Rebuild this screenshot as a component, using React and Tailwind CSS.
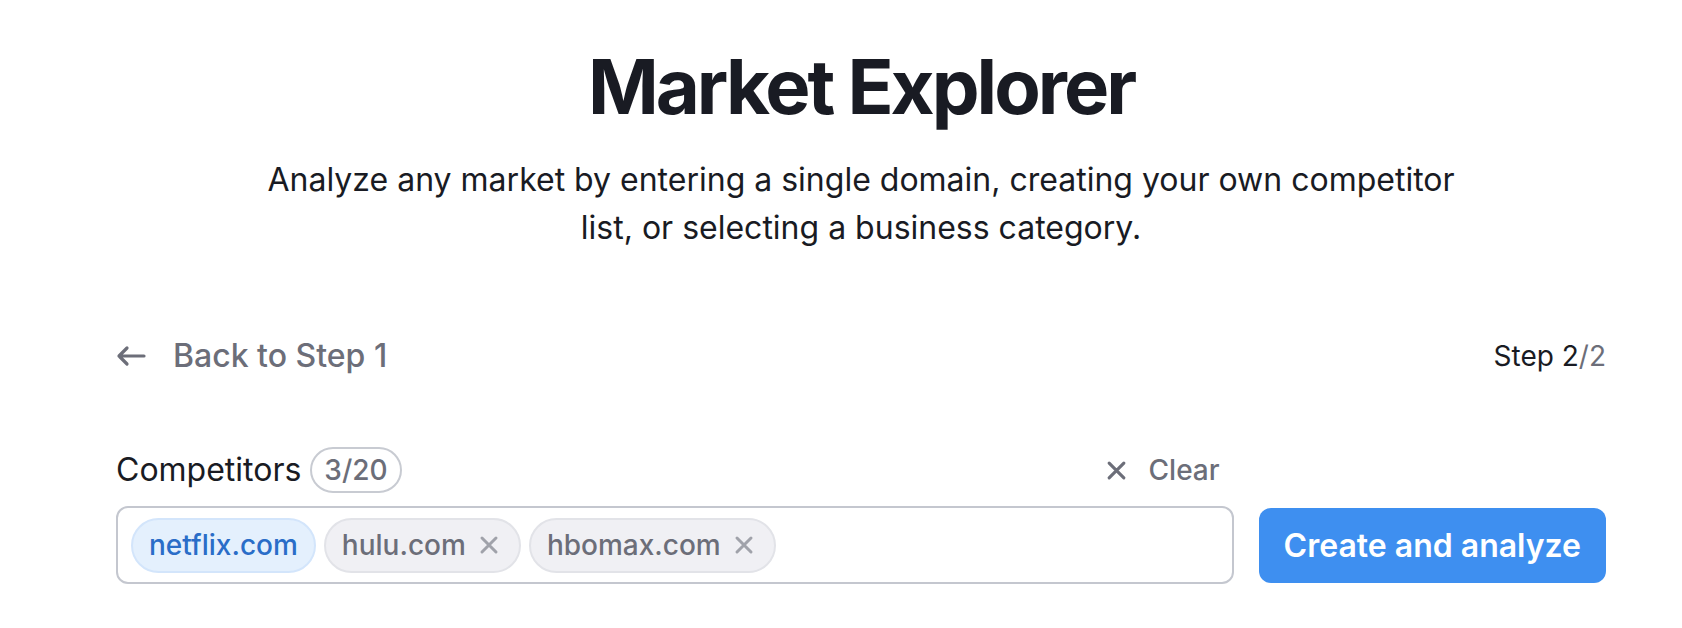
import React from 'react';

const font = { fontFamily: 'Inter, "Noto Sans", sans-serif' };

// bold X glyph used on chips and the Clear link
const Cross = ({ className, size = 20 }) => (
  <svg viewBox="0 0 20 20" width={size} height={size} className={className} fill="none" stroke="currentColor" strokeWidth="3" strokeLinecap="round">
    <path d="M3 3l14 14M17 3L3 17" />
  </svg>
);

const Chip = ({ label, active }) =>
  active ? (
    <div className="h-[55px] flex items-center px-[16px] rounded-full border-2 border-[#d3e5fb] bg-[#e4f0fd] text-[28px] font-medium text-[#2a6dc8]">
      {label}
    </div>
  ) : (
    <div className="h-[55px] flex items-center pl-[16px] pr-[20px] gap-[13px] rounded-full border-2 border-[#e2e3e8] bg-[#f0f0f4] text-[28px] font-medium text-[#6c6e79]">
      {label}
      <Cross className="text-[#a0a2aa]" size={20} />
    </div>
  );

export default function App() {
  return (
    <div className="w-[1682px] h-[628px] bg-white text-[#191b23] pl-[116px] pr-[76px] pt-[38px]" style={font}>
      {/* Heading */}
      <h1 className="text-center text-[76px] leading-[96px] font-bold tracking-[-3px]">Market Explorer</h1>
      <p className="mt-[22px] text-center text-[32px] leading-[48px]">
        Analyze any market by entering a single domain, creating your own competitor
        <br />
        list, or selecting a business category.
      </p>

      {/* Step row */}
      <div className="mt-[84px] flex items-center justify-between h-[40px]">
        <div className="flex items-center gap-[27px] text-[32px] text-[#6c6e79] font-medium">
          <svg viewBox="0 0 30 24" className="w-[30px] h-[24px]" fill="none" stroke="currentColor" strokeWidth="3.2" strokeLinecap="round" strokeLinejoin="round">
            <path d="M28 12H3M11 4l-8 8 8 8" />
          </svg>
          Back to Step 1
        </div>
        <div className="text-[28px]">
          Step 2<span className="text-[#6c6e79]">/2</span>
        </div>
      </div>

      {/* Competitors form */}
      <div className="mt-[70px] flex items-end gap-[25px]">
        <div className="flex-1">
          <div className="flex items-center justify-between h-[48px]">
            <div className="flex items-center gap-[9px]">
              <span className="text-[32px]">Competitors</span>
              <span className="h-[46px] px-[12px] flex items-center rounded-full border-2 border-[#c8cbd2] text-[28px] font-medium text-[#6c6e79]">3/20</span>
            </div>
            <div className="flex items-center gap-[22px] pr-[14px] text-[28px] font-medium text-[#6c6e79]">
              <Cross size={21} />
              Clear
            </div>
          </div>
          <div className="mt-[12px] h-[78px] flex items-center gap-[8px] px-[13px] rounded-[12px] border-2 border-[#c4c7cf]">
            <Chip label="netflix.com" active />
            <Chip label="hulu.com" />
            <Chip label="hbomax.com" />
          </div>
        </div>
        <button className="h-[75px] mb-[1px] px-[25px] rounded-[12px] bg-[#3e8ff0] text-white text-[32px] font-semibold">
          Create and analyze
        </button>
      </div>
    </div>
  );
}
